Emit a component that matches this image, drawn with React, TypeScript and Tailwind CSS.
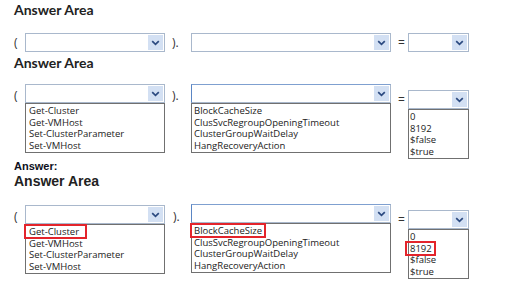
import React from "react";

const Chevron = () => (
  <svg width="9" height="6" viewBox="0 0 9 6">
    <path d="M1.2 1.2 L4.5 4.4 L7.8 1.2" fill="none" stroke="#2c4a80" strokeWidth="1.7" />
  </svg>
);

function Select({ w, focus = false }: { w: number; focus?: boolean }) {
  return (
    <div
      className={
        "flex h-[19px] bg-white border " +
        (focus ? "border-[#a9b8cc] border-l-[#5b86c4] border-t-[#7fa0d0]" : "border-[#a9b8cc]")
      }
      style={{ width: w }}
    >
      <div className="ml-auto my-px mr-px w-[15px] bg-[#d3e0f3] flex items-center justify-center">
        <Chevron />
      </div>
    </div>
  );
}

function Marked({ children, l, r }: { children: React.ReactNode; l: number; r: number }) {
  return (
    <span className="relative">
      {children}
      <span
        className="absolute top-[-1px] bottom-[-1px] border-2 border-[#e3242b]"
        style={{ left: -l, right: -r }}
      />
    </span>
  );
}

function List({ items, w, pl }: { items: React.ReactNode[]; w: number; pl: number }) {
  return (
    <div
      className="border border-[#707070] bg-white py-px text-[9.5px] leading-[11.5px] text-[#222] font-['Open_Sans',sans-serif]"
      style={{ width: w, paddingLeft: pl }}
    >
      {items.map((it, i) => (
        <div key={i} className="whitespace-nowrap h-[11.5px]">
          {it}
        </div>
      ))}
    </div>
  );
}

const Paren = ({ t, w, pl = 0, mt = 0 }: { t: string; w: number; pl?: number; mt?: number }) => (
  <span
    className="h-[19px] leading-[19px] text-[12px] text-[#333] font-['Open_Sans',sans-serif] shrink-0"
    style={{ width: w, paddingLeft: pl, marginTop: mt }}
  >
    {t}
  </span>
);

const cmds = ["Get-Cluster", "Get-VMHost", "Set-ClusterParameter", "Set-VMHost"];
const props = ["BlockCacheSize", "ClusSvcRegroupOpeningTimeout", "ClusterGroupWaitDelay", "HangRecoveryAction"];
const vals = ["0", "8192", "$false", "$true"];

export default function App() {
  return (
    <div className="w-[520px] h-[292px] bg-white pl-[14px] flex flex-col overflow-hidden">
      <h2 className="mt-px text-[14px] leading-[17px] font-bold text-[#222] font-['Lato',sans-serif]">
        Answer Area
      </h2>
      <div className="mt-[15px] flex items-start">
        <Paren t="(" w={11} />
        <Select w={140} />
        <Paren t=")." w={26} pl={7} />
        <Select w={200} />
        <Paren t="=" w={17} pl={7} />
        <Select w={61} />
      </div>
      <h2 className="mt-[2px] text-[14px] leading-[17px] font-bold text-[#222] font-['Lato',sans-serif]">
        Answer Area
      </h2>
      <div className="mt-[13px] h-[74px] flex items-start">
        <Paren t="(" w={11} mt={2} />
        <div className="flex flex-col">
          <Select w={140} />
          <List w={140} pl={3} items={cmds} />
        </div>
        <Paren t=")." w={26} pl={7} mt={2} />
        <div className="flex flex-col">
          <Select w={200} focus />
          <List w={200} pl={2} items={props} />
        </div>
        <Paren t="=" w={17} pl={7} mt={6} />
        <div className="mt-[6px] flex flex-col">
          <Select w={61} />
          <List w={61} pl={1} items={vals} />
        </div>
      </div>
      <div className="mt-[2px] text-[11px] leading-[13px] font-bold text-[#0d1020] font-['Liberation_Sans',Arial,sans-serif]">
        Answer:
      </div>
      <h2 className="text-[14px] leading-[17px] font-bold text-[#222] font-['Liberation_Sans',Arial,sans-serif]">
        Answer Area
      </h2>
      <div className="mt-[14px] flex items-start">
        <Paren t="(" w={11} mt={3} />
        <div className="mt-px flex flex-col">
          <Select w={140} />
          <List
            w={140}
            pl={3}
            items={[<Marked l={5} r={8}>Get-Cluster</Marked>, ...cmds.slice(1)]}
          />
        </div>
        <Paren t=")." w={26} pl={8} mt={3} />
        <div className="flex flex-col">
          <Select w={200} focus />
          <List
            w={200}
            pl={2}
            items={[<Marked l={4} r={4}>BlockCacheSize</Marked>, ...props.slice(1)]}
          />
        </div>
        <Paren t="=" w={17} pl={7} mt={6} />
        <div className="mt-[6px] flex flex-col">
          <Select w={61} />
          <List
            w={61}
            pl={1}
            items={[vals[0], <Marked l={5} r={4}>8192</Marked>, ...vals.slice(2)]}
          />
        </div>
      </div>
    </div>
  );
}
